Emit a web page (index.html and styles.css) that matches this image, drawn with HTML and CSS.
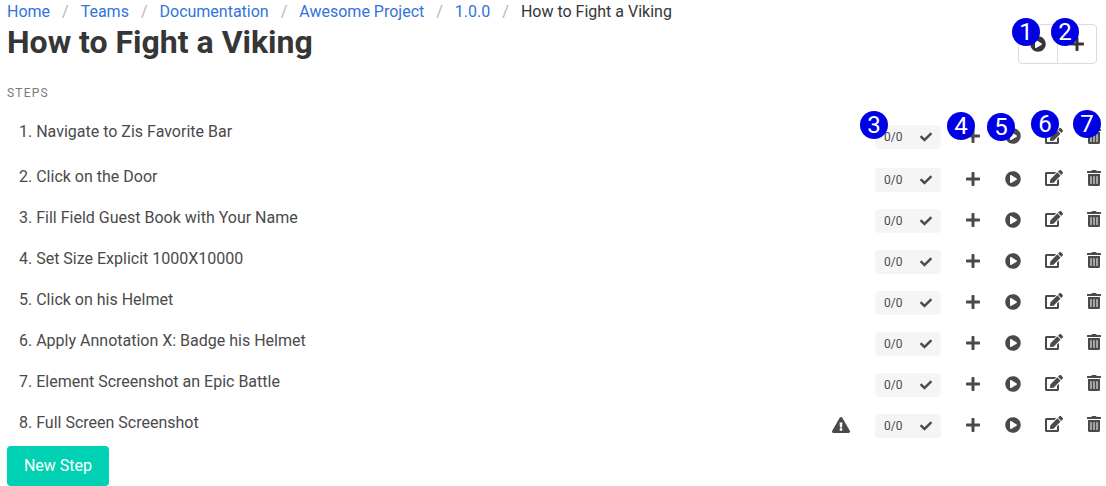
FILE: index.html
```html
<!DOCTYPE html>
<html lang="en">

<head>
    <meta charset="UTF-8">
    <meta name="viewport" content="width=device-width, initial-scale=1.0">
    <title>How to Fight a Viking</title>
    <link rel="stylesheet" href="styles.css">
</head>

<body>
    <svg class="defs" aria-hidden="true">
        <symbol id="i-play" viewBox="0 0 512 512"><path d="M256 8C119 8 8 119 8 256s111 248 248 248 248-111 248-248S393 8 256 8zm115.700 272l-176 101c-15.800 8.800-35.700-2.500-35.700-21V152c0-18.400 19.800-29.800 35.700-21l176 107c16.400 9.200 16.400 32.900 0 42z"/></symbol>
        <symbol id="i-plus" viewBox="0 0 448 512"><path d="M416 208H272V64c0-17.670-14.330-32-32-32h-32c-17.670 0-32 14.330-32 32v144H32c-17.670 0-32 14.330-32 32v32c0 17.670 14.330 32 32 32h144v144c0 17.670 14.330 32 32 32h32c17.670 0 32-14.330 32-32V304h144c17.670 0 32-14.330 32-32v-32c0-17.670-14.330-32-32-32z"/></symbol>
        <symbol id="i-check" viewBox="0 0 512 512"><path d="M173.898 439.404l-166.400-166.400c-9.997-9.997-9.997-26.206 0-36.204l36.203-36.204c9.997-9.998 26.207-9.998 36.204 0L192 312.690 432.095 72.596c9.997-9.997 26.207-9.997 36.204 0l36.203 36.204c9.997 9.997 9.997 26.206 0 36.204l-294.400 294.401c-9.998 9.997-26.207 9.997-36.204-.001z"/></symbol>
        <symbol id="i-edit" viewBox="0 0 576 512"><path d="M402.600 83.200l90.200 90.200c3.800 3.800 3.800 10 0 13.800L274.400 405.600l-92.800 10.300c-12.400 1.400-22.900-9.100-21.500-21.500l10.300-92.800L388.800 83.200c3.800-3.800 10-3.800 13.800 0zm162-22.900l-48.800-48.800c-15.200-15.200-39.900-15.200-55.200 0l-35.400 35.400c-3.800 3.800-3.800 10 0 13.800l90.200 90.200c3.800 3.800 10 3.800 13.800 0l35.400-35.400c15.200-15.300 15.200-40 0-55.200zM384 346.200V448H64V128h229.800c3.200 0 6.200-1.300 8.500-3.500l40-40c7.600-7.600 2.200-20.500-8.500-20.500H48C21.500 64 0 85.500 0 112v352c0 26.500 21.500 48 48 48h352c26.500 0 48-21.500 48-48V306.200c0-10.700-12.900-16-20.500-8.500l-40 40c-2.200 2.300-3.500 5.300-3.500 8.500z"/></symbol>
        <symbol id="i-trash" viewBox="0 0 448 512"><path d="M32 464a48 48 0 0 0 48 48h288a48 48 0 0 0 48-48V128H32zm272-256a16 16 0 0 1 32 0v224a16 16 0 0 1-32 0zm-96 0a16 16 0 0 1 32 0v224a16 16 0 0 1-32 0zm-96 0a16 16 0 0 1 32 0v224a16 16 0 0 1-32 0zM432 32H312l-9.400-18.700A24 24 0 0 0 281.100 0H166.800a23.720 23.720 0 0 0-21.400 13.300L136 32H16A16 16 0 0 0 0 48v32a16 16 0 0 0 16 16h416a16 16 0 0 0 16-16V48a16 16 0 0 0-16-16z"/></symbol>
        <symbol id="i-warn" viewBox="0 0 576 512"><path d="M569.517 440.013C587.975 472.007 564.806 512 527.940 512H48.054c-36.937 0-59.999-40.055-41.577-71.987L246.423 23.985c18.467-32.009 64.720-31.951 83.154 0l239.940 416.028zM288 354c-25.405 0-46 20.595-46 46s20.595 46 46 46 46-20.595 46-46-20.595-46-46-46zm-43.673-165.346l7.418 136c.347 6.364 5.609 11.346 11.982 11.346h48.546c6.373 0 11.635-4.982 11.982-11.346l7.418-136c.375-6.874-4.098-12.654-11.982-12.654h-63.383c-6.884 0-12.356 5.780-11.981 12.654z"/></symbol>
    </svg>

    <main>
        <nav class="breadcrumb">
            <a href="#">Home</a><span class="sep">/</span>
            <a href="#">Teams</a><span class="sep">/</span>
            <a href="#">Documentation</a><span class="sep">/</span>
            <a href="#">Awesome Project</a><span class="sep">/</span>
            <a href="#">1.0.0</a><span class="sep">/</span>
            <span class="current">How to Fight a Viking</span>
        </nav>

        <header class="page-head">
            <h1>How to Fight a Viking</h1>
            <div class="btn-group">
                <button type="button"><svg class="icon w16"><use href="#i-play"/></svg></button>
                <button type="button"><svg class="icon w14"><use href="#i-plus"/></svg></button>
            </div>
        </header>

        <p class="menu-label">Steps</p>

        <ol class="steps">
            <li class="step">
                <span class="step-name">1. Navigate to Zis Favorite Bar</span>
                <span class="tag">0/0<svg class="icon w12"><use href="#i-check"/></svg></span>
                <svg class="icon w14"><use href="#i-plus"/></svg>
                <svg class="icon w16"><use href="#i-play"/></svg>
                <svg class="icon w18 raised"><use href="#i-edit"/></svg>
                <svg class="icon w14 raised"><use href="#i-trash"/></svg>
            </li>
            <li class="step">
                <span class="step-name">2. Click on the Door</span>
                <span class="tag">0/0<svg class="icon w12"><use href="#i-check"/></svg></span>
                <svg class="icon w14"><use href="#i-plus"/></svg>
                <svg class="icon w16"><use href="#i-play"/></svg>
                <svg class="icon w18 raised"><use href="#i-edit"/></svg>
                <svg class="icon w14 raised"><use href="#i-trash"/></svg>
            </li>
            <li class="step">
                <span class="step-name">3. Fill Field Guest Book with Your Name</span>
                <span class="tag">0/0<svg class="icon w12"><use href="#i-check"/></svg></span>
                <svg class="icon w14"><use href="#i-plus"/></svg>
                <svg class="icon w16"><use href="#i-play"/></svg>
                <svg class="icon w18 raised"><use href="#i-edit"/></svg>
                <svg class="icon w14 raised"><use href="#i-trash"/></svg>
            </li>
            <li class="step">
                <span class="step-name">4. Set Size Explicit 1000X10000</span>
                <span class="tag">0/0<svg class="icon w12"><use href="#i-check"/></svg></span>
                <svg class="icon w14"><use href="#i-plus"/></svg>
                <svg class="icon w16"><use href="#i-play"/></svg>
                <svg class="icon w18 raised"><use href="#i-edit"/></svg>
                <svg class="icon w14 raised"><use href="#i-trash"/></svg>
            </li>
            <li class="step">
                <span class="step-name">5. Click on his Helmet</span>
                <span class="tag">0/0<svg class="icon w12"><use href="#i-check"/></svg></span>
                <svg class="icon w14"><use href="#i-plus"/></svg>
                <svg class="icon w16"><use href="#i-play"/></svg>
                <svg class="icon w18 raised"><use href="#i-edit"/></svg>
                <svg class="icon w14 raised"><use href="#i-trash"/></svg>
            </li>
            <li class="step">
                <span class="step-name">6. Apply Annotation X: Badge his Helmet</span>
                <span class="tag">0/0<svg class="icon w12"><use href="#i-check"/></svg></span>
                <svg class="icon w14"><use href="#i-plus"/></svg>
                <svg class="icon w16"><use href="#i-play"/></svg>
                <svg class="icon w18 raised"><use href="#i-edit"/></svg>
                <svg class="icon w14 raised"><use href="#i-trash"/></svg>
            </li>
            <li class="step">
                <span class="step-name">7. Element Screenshot an Epic Battle</span>
                <span class="tag">0/0<svg class="icon w12"><use href="#i-check"/></svg></span>
                <svg class="icon w14"><use href="#i-plus"/></svg>
                <svg class="icon w16"><use href="#i-play"/></svg>
                <svg class="icon w18 raised"><use href="#i-edit"/></svg>
                <svg class="icon w14 raised"><use href="#i-trash"/></svg>
            </li>
            <li class="step">
                <span class="step-name">8. Full Screen Screenshot</span>
                <svg class="icon w18"><use href="#i-warn"/></svg>
                <span class="tag">0/0<svg class="icon w12"><use href="#i-check"/></svg></span>
                <svg class="icon w14"><use href="#i-plus"/></svg>
                <svg class="icon w16"><use href="#i-play"/></svg>
                <svg class="icon w18 raised"><use href="#i-edit"/></svg>
                <svg class="icon w14 raised"><use href="#i-trash"/></svg>
            </li>
        </ol>

        <button type="button" class="new-step">New Step</button>
    </main>

    <!-- numbered callouts sit over the controls -->
    <span class="marker m1">1</span>
    <span class="marker m2">2</span>
    <span class="marker m3">3</span>
    <span class="marker m4">4</span>
    <span class="marker m5">5</span>
    <span class="marker m6">6</span>
    <span class="marker m7">7</span>
</body>

</html>
```

FILE: styles.css
```css
body {
    margin: 0;
    font-family: Roboto, "Liberation Sans", sans-serif;
    font-size: 16px;
    line-height: 24px;
    color: #4a4a4a;
    background: #fff;
    overflow: hidden;
}

.defs {
    display: none;
}

main {
    padding: 0 5px 0 7px;
}

a {
    color: #3273dc;
    text-decoration: none;
}

.breadcrumb {
    display: flex;
    height: 24px;
    white-space: nowrap;
}

.sep {
    color: #b5b5b5;
    width: 30.6px;
    text-align: center;
}

.current {
    color: #363636;
}

.page-head {
    display: flex;
    justify-content: space-between;
    align-items: flex-start;
    margin-right: 4px;
    margin-bottom: 20px;
}

h1 {
    margin: 0;
    font-size: 32px;
    line-height: 36px;
    font-weight: 700;
    color: #363636;
}

.btn-group {
    display: flex;
}

.btn-group button {
    display: flex;
    align-items: center;
    justify-content: center;
    width: 40px;
    height: 40px;
    padding: 0;
    background: #fff;
    border: 1px solid #dbdbdb;
    border-radius: 4px 0 0 4px;
}

.btn-group button + button {
    margin-left: -1px;
    border-radius: 0 4px 4px 0;
}

.icon {
    height: 16px;
    flex: none;
    fill: #4a4a4a;
}

.w12 {
    width: 12px;
}

.w14 {
    width: 14px;
}

.w16 {
    width: 16px;
}

.w18 {
    width: 18px;
}

.btn-group .icon {
    fill: #363636;
}

.menu-label {
    margin: 0 0 18px;
    font-size: 12px;
    line-height: 18px;
    letter-spacing: 1.2px;
    text-transform: uppercase;
    color: #7a7a7a;
}

.steps {
    margin: 0;
    padding: 0;
    list-style: none;
}

.step {
    display: flex;
    align-items: flex-start;
    gap: 24px;
    height: 36px;
    margin-bottom: 5px;
}

.step:first-child {
    height: 40px;
}

.step:last-child {
    height: 35px;
    margin-bottom: 0;
}

.step-name {
    flex: 1;
    padding-left: 12px;
}

.tag {
    margin: 3px 1px 0;
}

.tag + .icon {
    margin-right: 1px;
}

.step > .icon {
    margin-top: 6px;
}

.step > .icon.raised {
    margin-top: 5px;
}

.step:first-child > .icon {
    margin-top: 8px;
}

.step:first-child .tag {
    margin-top: 5px;
}

.tag {
    display: flex;
    align-items: center;
    justify-content: space-between;
    width: 66px;
    height: 24px;
    padding: 0 9px;
    box-sizing: border-box;
    background: #f5f5f5;
    border-radius: 4px;
    font-size: 12px;
}

.new-step {
    display: block;
    width: 102px;
    height: 40px;
    padding: 0;
    border: none;
    border-radius: 4px;
    background: #00d1b2;
    color: #fff;
    font: inherit;
}

.marker {
    position: absolute;
    width: 28px;
    height: 28px;
    border-radius: 50%;
    background: #0000e6;
    color: #fff;
    font-size: 24px;
    line-height: 28px;
    text-align: center;
}

.m1 {
    left: 1012px;
    top: 18px;
}

.m2 {
    left: 1051px;
    top: 18px;
}

.m3 {
    left: 860px;
    top: 111px;
}

.m4 {
    left: 947px;
    top: 112px;
}

.m5 {
    left: 987px;
    top: 113px;
}

.m6 {
    left: 1031px;
    top: 110px;
}

.m7 {
    left: 1073px;
    top: 110px;
}
```
